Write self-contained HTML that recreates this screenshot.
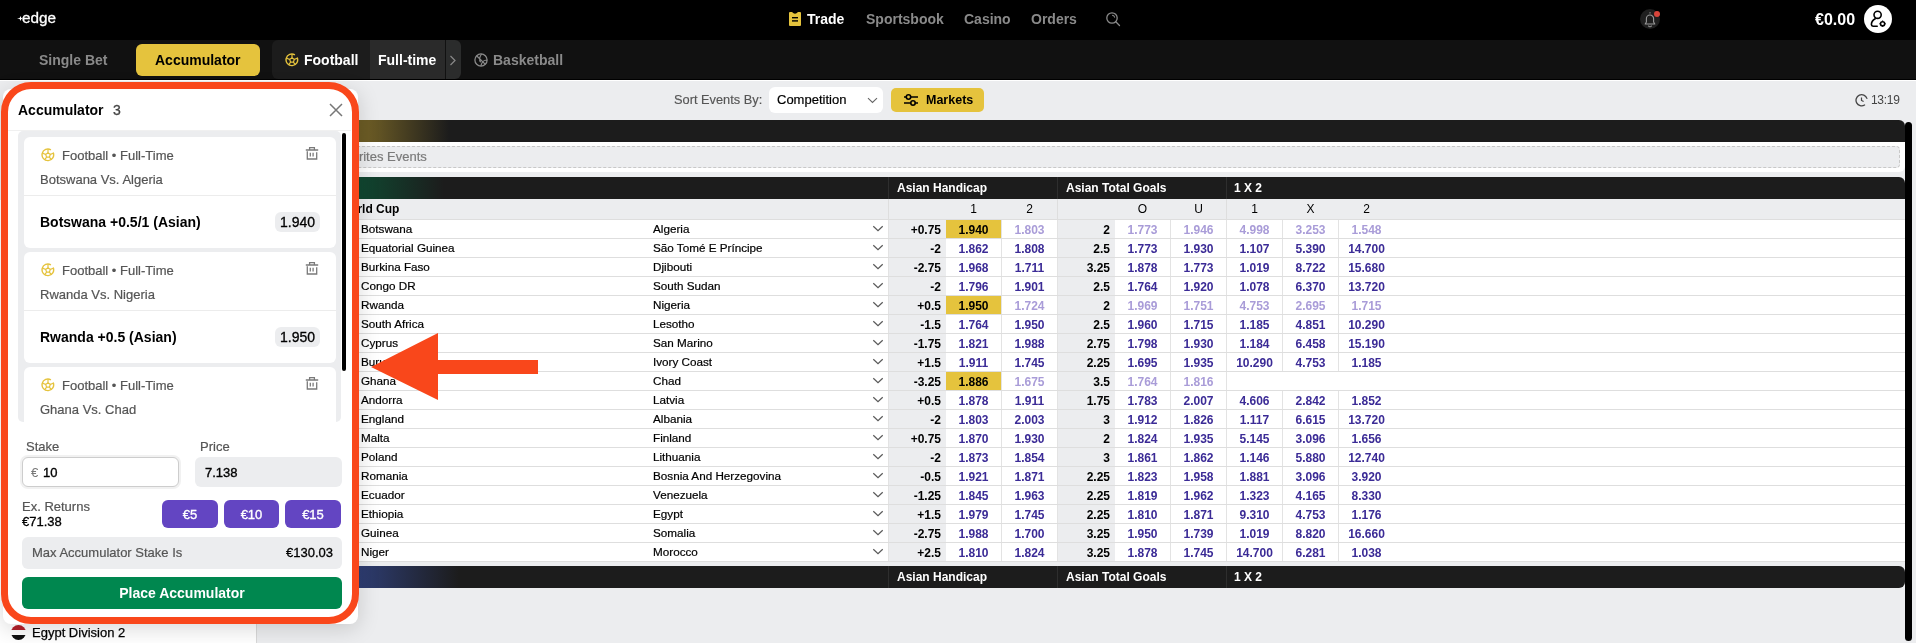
<!DOCTYPE html>
<html><head><meta charset="utf-8">
<style>
*{box-sizing:border-box;margin:0;padding:0}
html,body{width:1916px;height:643px;overflow:hidden;background:#ECEDEF;font-family:"Liberation Sans",sans-serif;color:#000}
.a{position:absolute}
.t{white-space:nowrap;line-height:1}
.nav{top:12px;font-size:14px;font-weight:700;color:#8a8a8a;line-height:14px;white-space:nowrap}
.rowbg{left:269px;width:1636px;height:18px;background:#fff}
.hl{left:269px;width:1636px;height:1px;background:#dedede}
.vl{width:1px;height:18px;background:#e3e3e3}
.tn{font-size:11.7px;line-height:11.7px;white-space:nowrap;color:#000;-webkit-text-stroke:0.2px #000}
.chev{left:873px;width:10px;height:6px}
.chev:before{content:"";position:absolute;left:2px;top:-3px;width:5px;height:5px;border-right:1.2px solid #666;border-bottom:1.2px solid #666;transform:rotate(45deg) scaleY(0.8)}
.gc{width:57px;height:18px;background:#ECEDEF}
.ln{width:57px;padding-right:5px;text-align:right;font-size:12px;line-height:12px;font-weight:700;color:#000}
.ysel{width:55px;height:18px;background:#E5C33D}
.od2{width:55px;text-align:center;font-size:12px;line-height:12px;font-weight:700}
.od{color:#3b2b96}
.ol{color:#a99cd8}
.hdr{left:269px;width:1636px;height:22px;background:#1c1c1c}
.ht{font-size:12px;line-height:12px;font-weight:700;color:#fff;white-space:nowrap}
.ch{width:55px;text-align:center;font-size:12px;line-height:12px;color:#000}
</style></head><body>
<div id="w" style="position:absolute;left:0;top:0;width:1916px;height:643px;will-change:transform;overflow:hidden">
<!-- TOP BAR -->
<div class="a" style="left:0;top:0;width:1916px;height:40px;background:#000"></div>
<svg class="a" style="left:17px;top:16px" width="6" height="5" viewBox="0 0 6 5"><path d="M0 2.5 L2.6 2 L3.6 0 L4.3 2 L6 2.5 L4.3 3 L3.6 5 L2.6 3 Z" fill="#fff"/></svg>
<div class="a t" style="left:22px;top:10px;font-size:15.3px;color:#fff;-webkit-text-stroke:0.3px #fff">edge</div>
<svg class="a" style="left:789px;top:12px" width="12" height="14" viewBox="0 0 12 14"><path d="M1 0 H3 Q6 3.6 9 0 H11 Q12 0 12 1 V13 Q12 14 11 14 H1 Q0 14 0 13 V1 Q0 0 1 0Z" fill="#E5C33D"/><rect x="3" y="5" width="6" height="1.4" fill="#000"/><rect x="3" y="8.2" width="6" height="1.4" fill="#000"/></svg>
<div class="a nav" style="left:807px;color:#fff">Trade</div>
<div class="a nav" style="left:866px">Sportsbook</div>
<div class="a nav" style="left:964px">Casino</div>
<div class="a nav" style="left:1031px">Orders</div>
<svg class="a" style="left:1105px;top:11px" width="16" height="16" viewBox="0 0 16 16"><circle cx="7" cy="7" r="5.2" fill="none" stroke="#8a8a8a" stroke-width="1.3"/><path d="M10.8 10.8 L14.5 14.5" stroke="#8a8a8a" stroke-width="1.3" stroke-linecap="round"/><path d="M7.5 4.3 A2.8 2.8 0 0 1 9.6 6.2" fill="none" stroke="#8a8a8a" stroke-width="1.1" stroke-linecap="round"/></svg>
<div class="a" style="left:1640px;top:9px;width:20px;height:20px;border-radius:50%;background:#1f1f1f"></div>
<svg class="a" style="left:1640px;top:9px" width="20" height="20" viewBox="0 0 20 20"><path d="M10 3.3 V4.6 M5.2 15 L6.4 13 V9.6 A3.6 3.6 0 0 1 13.6 9.6 V13 L14.8 15 Z M8.6 16.4 A1.4 1.4 0 0 0 11.4 16.4" fill="none" stroke="#9a9a9a" stroke-width="1.1" stroke-linejoin="round"/></svg>
<div class="a" style="left:1654px;top:11px;width:6px;height:6px;border-radius:50%;background:#D8453B"></div>
<div class="a nav" style="left:1815px;top:12px;font-size:16px;line-height:16px;color:#fff">&euro;0.00</div>
<div class="a" style="left:1864px;top:5px;width:28px;height:28px;border-radius:50%;background:#fff"></div>
<svg class="a" style="left:1864px;top:5px" width="28" height="28" viewBox="0 0 28 28"><circle cx="13.6" cy="9.8" r="3.6" fill="none" stroke="#000" stroke-width="1.6"/><path d="M11.2 13.8 C8.6 15.2 7.4 17.6 7.4 19.6 C7.4 20.8 8 21.2 9 21.2 H13.2" fill="none" stroke="#000" stroke-width="1.6" stroke-linecap="round"/><circle cx="18.6" cy="18.8" r="2.1" fill="none" stroke="#000" stroke-width="1.6"/><path d="M18.6 15.6V16.3M18.6 21.3V22M15.4 18.8H16.1M21.1 18.8H21.8" stroke="#000" stroke-width="1.1"/></svg>

<!-- SUB BAR -->
<div class="a" style="left:0;top:40px;width:1916px;height:39px;background:#111"></div>
<div class="a" style="left:0;top:79px;width:1916px;height:1px;background:#000"></div>
<div class="a" style="left:0;top:80px;width:1916px;height:1px;background:#fff"></div>
<div class="a nav" style="left:39px;top:53px;color:#8a8a8a">Single Bet</div>
<div class="a" style="left:136px;top:44px;width:124px;height:32px;border-radius:6px;background:#E5C33D"></div>
<div class="a nav" style="left:155px;top:53px;color:#000">Accumulator</div>
<div class="a" style="left:272px;top:40px;width:98px;height:39px;background:#1c1c1c;border-radius:6px 0 0 6px"></div>
<div class="a" style="left:370px;top:40px;width:75px;height:39px;background:#2a2a2a"></div>
<div class="a" style="left:445px;top:40px;width:1px;height:39px;background:#111"></div>
<div class="a" style="left:446px;top:40px;width:15px;height:39px;background:#2b2c2c;border-radius:0 6px 6px 0"></div>
<svg class="a" style="left:285px;top:53px" width="14" height="14" viewBox="0 0 14 14"><path d="M12.2 4.6 A5.8 5.8 0 1 1 9.9 1.9" fill="none" stroke="#E5C33D" stroke-width="1.4"/><polygon points="7,4.7 9.3,6.4 8.4,9.1 5.6,9.1 4.7,6.4" fill="none" stroke="#E5C33D" stroke-width="1.2"/><path d="M7 4.7V1.2M9.3 6.4L12.4 5.3M8.4 9.1L10.4 11.8M5.6 9.1L3.6 11.8M4.7 6.4L1.5 5.3" stroke="#E5C33D" stroke-width="1.2"/></svg>
<div class="a nav" style="left:304px;top:53px;color:#fff">Football</div>
<div class="a nav" style="left:378px;top:53px;color:#fff">Full-time</div>
<svg class="a" style="left:474px;top:53px" width="14" height="14" viewBox="0 0 14 14"><circle cx="7" cy="7" r="6.1" fill="none" stroke="#8a8a8a" stroke-width="1.3"/><path d="M2.6 2.8 L11.4 11.4 M7.6 1 C5.6 3.6 5.2 7 6.6 9.2 M13 7.4 C10.4 6.8 8 8.6 6.8 13" fill="none" stroke="#8a8a8a" stroke-width="1.2"/></svg>
<svg class="a" style="left:449px;top:55px" width="8" height="11" viewBox="0 0 8 11"><path d="M1.5 1 L6 5.5 L1.5 10" fill="none" stroke="#8a8a8a" stroke-width="1.2"/></svg>
<div class="a nav" style="left:493px;top:53px;color:#8a8a8a">Basketball</div>

<!-- SORT BAR -->
<div class="a t" style="left:674px;top:94px;font-size:12.8px;color:#555;-webkit-text-stroke:0.15px #555">Sort Events By:</div>
<div class="a" style="left:769px;top:87px;width:114px;height:26px;background:#fff;border-radius:6px"></div>
<div class="a t" style="left:777px;top:93px;font-size:13px;color:#000;-webkit-text-stroke:0.2px #000">Competition</div>
<div class="a" style="left:891px;top:88px;width:93px;height:24px;background:#E5C33D;border-radius:5px"></div>
<div class="a t" style="left:926px;top:94px;font-size:12.5px;font-weight:700;color:#000">Markets</div>
<svg class="a" style="left:903px;top:93px" width="16" height="14" viewBox="0 0 16 14"><path d="M1 4 H15 M1 10 H15" stroke="#000" stroke-width="1.6"/><circle cx="5.5" cy="4" r="2.2" fill="#E5C33D" stroke="#000" stroke-width="1.6"/><circle cx="10" cy="10" r="2.2" fill="#E5C33D" stroke="#000" stroke-width="1.6"/></svg>
<svg class="a" style="left:867px;top:97px" width="11" height="7" viewBox="0 0 11 7"><path d="M1 1.2 L5.5 5.5 L10 1.2" fill="none" stroke="#666" stroke-width="1.1"/></svg>
<div class="a t" style="left:1871px;top:94px;font-size:12px;color:#444;letter-spacing:-0.3px">13:19</div>
<svg class="a" style="left:1855px;top:93px" width="14" height="14" viewBox="0 0 14 14"><path d="M11.9 5.4 A5.6 5.6 0 1 0 9.6 12" fill="none" stroke="#444" stroke-width="1.3" stroke-linecap="round"/><path d="M6.5 4.6 V7.4 L8.6 8.6" fill="none" stroke="#444" stroke-width="1.2"/></svg>

<!-- TABLE -->
<div class="a" style="left:269px;top:120px;width:1636px;height:22px;background:linear-gradient(90deg,#6e5d25 0,#6b5b25 100px,#1c1c1c 180px);border-radius:6px 6px 0 0"></div>
<div class="a" style="left:269px;top:142px;width:1636px;height:30px;background:#fff;border-radius:0 0 6px 6px"></div>
<div class="a" style="left:273px;top:146px;width:1627px;height:22px;background:#ECEDEF;border:1px dashed #c8c8c8;border-radius:4px"></div>
<div class="a t" style="left:330px;top:150px;font-size:13px;color:#7b7b7b;-webkit-text-stroke:0.2px #7b7b7b">Favorites Events</div>

<div class="a hdr" style="top:177px;background:linear-gradient(90deg,#0f4a32 0,#0f4a32 85px,#1c1c1c 175px);border-radius:6px 6px 0 0"></div>
<div class="a" style="left:888px;top:177px;width:1px;height:22px;background:#2e2e2e"></div>
<div class="a" style="left:1057px;top:177px;width:1px;height:22px;background:#2e2e2e"></div>
<div class="a" style="left:1226px;top:177px;width:1px;height:22px;background:#2e2e2e"></div>
<div class="a ht" style="left:897px;top:182px">Asian Handicap</div>
<div class="a ht" style="left:1066px;top:182px">Asian Total Goals</div>
<div class="a ht" style="left:1234px;top:182px">1 X 2</div>
<div class="a" style="left:269px;top:199px;width:1636px;height:20px;background:#ECEDEF"></div>
<div class="a" style="left:888px;top:199px;width:1px;height:20px;background:#dedede"></div>
<div class="a" style="left:1057px;top:199px;width:1px;height:20px;background:#dedede"></div>
<div class="a" style="left:1226px;top:199px;width:1px;height:20px;background:#dedede"></div>
<div class="a" style="left:269px;top:219px;width:1636px;height:1px;background:#dedede"></div>
<div class="a ht" style="left:339px;top:203px;color:#000">World Cup</div>
<div class="a ch" style="left:946px;top:203px">1</div>
<div class="a ch" style="left:1002px;top:203px">2</div>
<div class="a ch" style="left:1115px;top:203px">O</div>
<div class="a ch" style="left:1171px;top:203px">U</div>
<div class="a ch" style="left:1227px;top:203px">1</div>
<div class="a ch" style="left:1283px;top:203px">X</div>
<div class="a ch" style="left:1339px;top:203px">2</div>

<div class="a hdr" style="top:566px;background:linear-gradient(90deg,#2e3d73 0,#2e3d73 90px,#1c1c1c 190px);border-radius:0 6px 6px 6px"></div>
<div class="a" style="left:888px;top:566px;width:1px;height:22px;background:#2e2e2e"></div>
<div class="a" style="left:1057px;top:566px;width:1px;height:22px;background:#2e2e2e"></div>
<div class="a" style="left:1226px;top:566px;width:1px;height:22px;background:#2e2e2e"></div>
<div class="a ht" style="left:897px;top:571px">Asian Handicap</div>
<div class="a ht" style="left:1066px;top:571px">Asian Total Goals</div>
<div class="a ht" style="left:1234px;top:571px">1 X 2</div>
<div class="a" style="left:1905px;top:122px;width:7px;height:519px;background:#000;border-radius:4px"></div>
<div class="a rowbg" style="top:220px"></div>
<div class="a hl" style="top:238px"></div>
<div class="a tn" style="left:361px;top:223px">Botswana</div>
<div class="a tn" style="left:653px;top:223px">Algeria</div>
<svg class="a" style="left:872px;top:225px" width="12" height="7" viewBox="0 0 12 7"><path d="M1.3 1.2 L6 5.6 L10.7 1.2" fill="none" stroke="#5a5a5a" stroke-width="1.25"/></svg>
<div class="a gc" style="left:889px;top:220px"></div>
<div class="a gc" style="left:1058px;top:220px"></div>
<div class="a ln" style="left:889px;top:224px">+0.75</div>
<div class="a ln" style="left:1058px;top:224px">2</div>
<div class="a ysel" style="left:946px;top:220px"></div>
<div class="a od2" style="left:946px;top:224px;color:#000">1.940</div>
<div class="a od2 ol" style="left:1002px;top:224px">1.803</div>
<div class="a od2 ol" style="left:1115px;top:224px">1.773</div>
<div class="a od2 ol" style="left:1171px;top:224px">1.946</div>
<div class="a od2 ol" style="left:1227px;top:224px">4.998</div>
<div class="a od2 ol" style="left:1283px;top:224px">3.253</div>
<div class="a od2 ol" style="left:1339px;top:224px">1.548</div>
<div class="a vl" style="left:888px;top:220px"></div>
<div class="a vl" style="left:1001px;top:220px"></div>
<div class="a vl" style="left:1057px;top:220px"></div>
<div class="a vl" style="left:1170px;top:220px"></div>
<div class="a vl" style="left:1226px;top:220px"></div>
<div class="a vl" style="left:1282px;top:220px"></div>
<div class="a vl" style="left:1338px;top:220px"></div>
<div class="a rowbg" style="top:239px"></div>
<div class="a hl" style="top:257px"></div>
<div class="a tn" style="left:361px;top:242px">Equatorial Guinea</div>
<div class="a tn" style="left:653px;top:242px">São Tomé E Príncipe</div>
<svg class="a" style="left:872px;top:244px" width="12" height="7" viewBox="0 0 12 7"><path d="M1.3 1.2 L6 5.6 L10.7 1.2" fill="none" stroke="#5a5a5a" stroke-width="1.25"/></svg>
<div class="a gc" style="left:889px;top:239px"></div>
<div class="a gc" style="left:1058px;top:239px"></div>
<div class="a ln" style="left:889px;top:243px">-2</div>
<div class="a ln" style="left:1058px;top:243px">2.5</div>
<div class="a od2 od" style="left:946px;top:243px">1.862</div>
<div class="a od2 od" style="left:1002px;top:243px">1.808</div>
<div class="a od2 od" style="left:1115px;top:243px">1.773</div>
<div class="a od2 od" style="left:1171px;top:243px">1.930</div>
<div class="a od2 od" style="left:1227px;top:243px">1.107</div>
<div class="a od2 od" style="left:1283px;top:243px">5.390</div>
<div class="a od2 od" style="left:1339px;top:243px">14.700</div>
<div class="a vl" style="left:888px;top:239px"></div>
<div class="a vl" style="left:1001px;top:239px"></div>
<div class="a vl" style="left:1057px;top:239px"></div>
<div class="a vl" style="left:1170px;top:239px"></div>
<div class="a vl" style="left:1226px;top:239px"></div>
<div class="a vl" style="left:1282px;top:239px"></div>
<div class="a vl" style="left:1338px;top:239px"></div>
<div class="a rowbg" style="top:258px"></div>
<div class="a hl" style="top:276px"></div>
<div class="a tn" style="left:361px;top:261px">Burkina Faso</div>
<div class="a tn" style="left:653px;top:261px">Djibouti</div>
<svg class="a" style="left:872px;top:263px" width="12" height="7" viewBox="0 0 12 7"><path d="M1.3 1.2 L6 5.6 L10.7 1.2" fill="none" stroke="#5a5a5a" stroke-width="1.25"/></svg>
<div class="a gc" style="left:889px;top:258px"></div>
<div class="a gc" style="left:1058px;top:258px"></div>
<div class="a ln" style="left:889px;top:262px">-2.75</div>
<div class="a ln" style="left:1058px;top:262px">3.25</div>
<div class="a od2 od" style="left:946px;top:262px">1.968</div>
<div class="a od2 od" style="left:1002px;top:262px">1.711</div>
<div class="a od2 od" style="left:1115px;top:262px">1.878</div>
<div class="a od2 od" style="left:1171px;top:262px">1.773</div>
<div class="a od2 od" style="left:1227px;top:262px">1.019</div>
<div class="a od2 od" style="left:1283px;top:262px">8.722</div>
<div class="a od2 od" style="left:1339px;top:262px">15.680</div>
<div class="a vl" style="left:888px;top:258px"></div>
<div class="a vl" style="left:1001px;top:258px"></div>
<div class="a vl" style="left:1057px;top:258px"></div>
<div class="a vl" style="left:1170px;top:258px"></div>
<div class="a vl" style="left:1226px;top:258px"></div>
<div class="a vl" style="left:1282px;top:258px"></div>
<div class="a vl" style="left:1338px;top:258px"></div>
<div class="a rowbg" style="top:277px"></div>
<div class="a hl" style="top:295px"></div>
<div class="a tn" style="left:361px;top:280px">Congo DR</div>
<div class="a tn" style="left:653px;top:280px">South Sudan</div>
<svg class="a" style="left:872px;top:282px" width="12" height="7" viewBox="0 0 12 7"><path d="M1.3 1.2 L6 5.6 L10.7 1.2" fill="none" stroke="#5a5a5a" stroke-width="1.25"/></svg>
<div class="a gc" style="left:889px;top:277px"></div>
<div class="a gc" style="left:1058px;top:277px"></div>
<div class="a ln" style="left:889px;top:281px">-2</div>
<div class="a ln" style="left:1058px;top:281px">2.5</div>
<div class="a od2 od" style="left:946px;top:281px">1.796</div>
<div class="a od2 od" style="left:1002px;top:281px">1.901</div>
<div class="a od2 od" style="left:1115px;top:281px">1.764</div>
<div class="a od2 od" style="left:1171px;top:281px">1.920</div>
<div class="a od2 od" style="left:1227px;top:281px">1.078</div>
<div class="a od2 od" style="left:1283px;top:281px">6.370</div>
<div class="a od2 od" style="left:1339px;top:281px">13.720</div>
<div class="a vl" style="left:888px;top:277px"></div>
<div class="a vl" style="left:1001px;top:277px"></div>
<div class="a vl" style="left:1057px;top:277px"></div>
<div class="a vl" style="left:1170px;top:277px"></div>
<div class="a vl" style="left:1226px;top:277px"></div>
<div class="a vl" style="left:1282px;top:277px"></div>
<div class="a vl" style="left:1338px;top:277px"></div>
<div class="a rowbg" style="top:296px"></div>
<div class="a hl" style="top:314px"></div>
<div class="a tn" style="left:361px;top:299px">Rwanda</div>
<div class="a tn" style="left:653px;top:299px">Nigeria</div>
<svg class="a" style="left:872px;top:301px" width="12" height="7" viewBox="0 0 12 7"><path d="M1.3 1.2 L6 5.6 L10.7 1.2" fill="none" stroke="#5a5a5a" stroke-width="1.25"/></svg>
<div class="a gc" style="left:889px;top:296px"></div>
<div class="a gc" style="left:1058px;top:296px"></div>
<div class="a ln" style="left:889px;top:300px">+0.5</div>
<div class="a ln" style="left:1058px;top:300px">2</div>
<div class="a ysel" style="left:946px;top:296px"></div>
<div class="a od2" style="left:946px;top:300px;color:#000">1.950</div>
<div class="a od2 ol" style="left:1002px;top:300px">1.724</div>
<div class="a od2 ol" style="left:1115px;top:300px">1.969</div>
<div class="a od2 ol" style="left:1171px;top:300px">1.751</div>
<div class="a od2 ol" style="left:1227px;top:300px">4.753</div>
<div class="a od2 ol" style="left:1283px;top:300px">2.695</div>
<div class="a od2 ol" style="left:1339px;top:300px">1.715</div>
<div class="a vl" style="left:888px;top:296px"></div>
<div class="a vl" style="left:1001px;top:296px"></div>
<div class="a vl" style="left:1057px;top:296px"></div>
<div class="a vl" style="left:1170px;top:296px"></div>
<div class="a vl" style="left:1226px;top:296px"></div>
<div class="a vl" style="left:1282px;top:296px"></div>
<div class="a vl" style="left:1338px;top:296px"></div>
<div class="a rowbg" style="top:315px"></div>
<div class="a hl" style="top:333px"></div>
<div class="a tn" style="left:361px;top:318px">South Africa</div>
<div class="a tn" style="left:653px;top:318px">Lesotho</div>
<svg class="a" style="left:872px;top:320px" width="12" height="7" viewBox="0 0 12 7"><path d="M1.3 1.2 L6 5.6 L10.7 1.2" fill="none" stroke="#5a5a5a" stroke-width="1.25"/></svg>
<div class="a gc" style="left:889px;top:315px"></div>
<div class="a gc" style="left:1058px;top:315px"></div>
<div class="a ln" style="left:889px;top:319px">-1.5</div>
<div class="a ln" style="left:1058px;top:319px">2.5</div>
<div class="a od2 od" style="left:946px;top:319px">1.764</div>
<div class="a od2 od" style="left:1002px;top:319px">1.950</div>
<div class="a od2 od" style="left:1115px;top:319px">1.960</div>
<div class="a od2 od" style="left:1171px;top:319px">1.715</div>
<div class="a od2 od" style="left:1227px;top:319px">1.185</div>
<div class="a od2 od" style="left:1283px;top:319px">4.851</div>
<div class="a od2 od" style="left:1339px;top:319px">10.290</div>
<div class="a vl" style="left:888px;top:315px"></div>
<div class="a vl" style="left:1001px;top:315px"></div>
<div class="a vl" style="left:1057px;top:315px"></div>
<div class="a vl" style="left:1170px;top:315px"></div>
<div class="a vl" style="left:1226px;top:315px"></div>
<div class="a vl" style="left:1282px;top:315px"></div>
<div class="a vl" style="left:1338px;top:315px"></div>
<div class="a rowbg" style="top:334px"></div>
<div class="a hl" style="top:352px"></div>
<div class="a tn" style="left:361px;top:337px">Cyprus</div>
<div class="a tn" style="left:653px;top:337px">San Marino</div>
<svg class="a" style="left:872px;top:339px" width="12" height="7" viewBox="0 0 12 7"><path d="M1.3 1.2 L6 5.6 L10.7 1.2" fill="none" stroke="#5a5a5a" stroke-width="1.25"/></svg>
<div class="a gc" style="left:889px;top:334px"></div>
<div class="a gc" style="left:1058px;top:334px"></div>
<div class="a ln" style="left:889px;top:338px">-1.75</div>
<div class="a ln" style="left:1058px;top:338px">2.75</div>
<div class="a od2 od" style="left:946px;top:338px">1.821</div>
<div class="a od2 od" style="left:1002px;top:338px">1.988</div>
<div class="a od2 od" style="left:1115px;top:338px">1.798</div>
<div class="a od2 od" style="left:1171px;top:338px">1.930</div>
<div class="a od2 od" style="left:1227px;top:338px">1.184</div>
<div class="a od2 od" style="left:1283px;top:338px">6.458</div>
<div class="a od2 od" style="left:1339px;top:338px">15.190</div>
<div class="a vl" style="left:888px;top:334px"></div>
<div class="a vl" style="left:1001px;top:334px"></div>
<div class="a vl" style="left:1057px;top:334px"></div>
<div class="a vl" style="left:1170px;top:334px"></div>
<div class="a vl" style="left:1226px;top:334px"></div>
<div class="a vl" style="left:1282px;top:334px"></div>
<div class="a vl" style="left:1338px;top:334px"></div>
<div class="a rowbg" style="top:353px"></div>
<div class="a hl" style="top:371px"></div>
<div class="a tn" style="left:361px;top:356px">Burundi</div>
<div class="a tn" style="left:653px;top:356px">Ivory Coast</div>
<svg class="a" style="left:872px;top:358px" width="12" height="7" viewBox="0 0 12 7"><path d="M1.3 1.2 L6 5.6 L10.7 1.2" fill="none" stroke="#5a5a5a" stroke-width="1.25"/></svg>
<div class="a gc" style="left:889px;top:353px"></div>
<div class="a gc" style="left:1058px;top:353px"></div>
<div class="a ln" style="left:889px;top:357px">+1.5</div>
<div class="a ln" style="left:1058px;top:357px">2.25</div>
<div class="a od2 od" style="left:946px;top:357px">1.911</div>
<div class="a od2 od" style="left:1002px;top:357px">1.745</div>
<div class="a od2 od" style="left:1115px;top:357px">1.695</div>
<div class="a od2 od" style="left:1171px;top:357px">1.935</div>
<div class="a od2 od" style="left:1227px;top:357px">10.290</div>
<div class="a od2 od" style="left:1283px;top:357px">4.753</div>
<div class="a od2 od" style="left:1339px;top:357px">1.185</div>
<div class="a vl" style="left:888px;top:353px"></div>
<div class="a vl" style="left:1001px;top:353px"></div>
<div class="a vl" style="left:1057px;top:353px"></div>
<div class="a vl" style="left:1170px;top:353px"></div>
<div class="a vl" style="left:1226px;top:353px"></div>
<div class="a vl" style="left:1282px;top:353px"></div>
<div class="a vl" style="left:1338px;top:353px"></div>
<div class="a rowbg" style="top:372px"></div>
<div class="a hl" style="top:390px"></div>
<div class="a tn" style="left:361px;top:375px">Ghana</div>
<div class="a tn" style="left:653px;top:375px">Chad</div>
<svg class="a" style="left:872px;top:377px" width="12" height="7" viewBox="0 0 12 7"><path d="M1.3 1.2 L6 5.6 L10.7 1.2" fill="none" stroke="#5a5a5a" stroke-width="1.25"/></svg>
<div class="a gc" style="left:889px;top:372px"></div>
<div class="a gc" style="left:1058px;top:372px"></div>
<div class="a ln" style="left:889px;top:376px">-3.25</div>
<div class="a ln" style="left:1058px;top:376px">3.5</div>
<div class="a ysel" style="left:946px;top:372px"></div>
<div class="a od2" style="left:946px;top:376px;color:#000">1.886</div>
<div class="a od2 ol" style="left:1002px;top:376px">1.675</div>
<div class="a od2 ol" style="left:1115px;top:376px">1.764</div>
<div class="a od2 ol" style="left:1171px;top:376px">1.816</div>
<div class="a vl" style="left:888px;top:372px"></div>
<div class="a vl" style="left:1001px;top:372px"></div>
<div class="a vl" style="left:1057px;top:372px"></div>
<div class="a vl" style="left:1170px;top:372px"></div>
<div class="a vl" style="left:1226px;top:372px"></div>
<div class="a rowbg" style="top:391px"></div>
<div class="a hl" style="top:409px"></div>
<div class="a tn" style="left:361px;top:394px">Andorra</div>
<div class="a tn" style="left:653px;top:394px">Latvia</div>
<svg class="a" style="left:872px;top:396px" width="12" height="7" viewBox="0 0 12 7"><path d="M1.3 1.2 L6 5.6 L10.7 1.2" fill="none" stroke="#5a5a5a" stroke-width="1.25"/></svg>
<div class="a gc" style="left:889px;top:391px"></div>
<div class="a gc" style="left:1058px;top:391px"></div>
<div class="a ln" style="left:889px;top:395px">+0.5</div>
<div class="a ln" style="left:1058px;top:395px">1.75</div>
<div class="a od2 od" style="left:946px;top:395px">1.878</div>
<div class="a od2 od" style="left:1002px;top:395px">1.911</div>
<div class="a od2 od" style="left:1115px;top:395px">1.783</div>
<div class="a od2 od" style="left:1171px;top:395px">2.007</div>
<div class="a od2 od" style="left:1227px;top:395px">4.606</div>
<div class="a od2 od" style="left:1283px;top:395px">2.842</div>
<div class="a od2 od" style="left:1339px;top:395px">1.852</div>
<div class="a vl" style="left:888px;top:391px"></div>
<div class="a vl" style="left:1001px;top:391px"></div>
<div class="a vl" style="left:1057px;top:391px"></div>
<div class="a vl" style="left:1170px;top:391px"></div>
<div class="a vl" style="left:1226px;top:391px"></div>
<div class="a vl" style="left:1282px;top:391px"></div>
<div class="a vl" style="left:1338px;top:391px"></div>
<div class="a rowbg" style="top:410px"></div>
<div class="a hl" style="top:428px"></div>
<div class="a tn" style="left:361px;top:413px">England</div>
<div class="a tn" style="left:653px;top:413px">Albania</div>
<svg class="a" style="left:872px;top:415px" width="12" height="7" viewBox="0 0 12 7"><path d="M1.3 1.2 L6 5.6 L10.7 1.2" fill="none" stroke="#5a5a5a" stroke-width="1.25"/></svg>
<div class="a gc" style="left:889px;top:410px"></div>
<div class="a gc" style="left:1058px;top:410px"></div>
<div class="a ln" style="left:889px;top:414px">-2</div>
<div class="a ln" style="left:1058px;top:414px">3</div>
<div class="a od2 od" style="left:946px;top:414px">1.803</div>
<div class="a od2 od" style="left:1002px;top:414px">2.003</div>
<div class="a od2 od" style="left:1115px;top:414px">1.912</div>
<div class="a od2 od" style="left:1171px;top:414px">1.826</div>
<div class="a od2 od" style="left:1227px;top:414px">1.117</div>
<div class="a od2 od" style="left:1283px;top:414px">6.615</div>
<div class="a od2 od" style="left:1339px;top:414px">13.720</div>
<div class="a vl" style="left:888px;top:410px"></div>
<div class="a vl" style="left:1001px;top:410px"></div>
<div class="a vl" style="left:1057px;top:410px"></div>
<div class="a vl" style="left:1170px;top:410px"></div>
<div class="a vl" style="left:1226px;top:410px"></div>
<div class="a vl" style="left:1282px;top:410px"></div>
<div class="a vl" style="left:1338px;top:410px"></div>
<div class="a rowbg" style="top:429px"></div>
<div class="a hl" style="top:447px"></div>
<div class="a tn" style="left:361px;top:432px">Malta</div>
<div class="a tn" style="left:653px;top:432px">Finland</div>
<svg class="a" style="left:872px;top:434px" width="12" height="7" viewBox="0 0 12 7"><path d="M1.3 1.2 L6 5.6 L10.7 1.2" fill="none" stroke="#5a5a5a" stroke-width="1.25"/></svg>
<div class="a gc" style="left:889px;top:429px"></div>
<div class="a gc" style="left:1058px;top:429px"></div>
<div class="a ln" style="left:889px;top:433px">+0.75</div>
<div class="a ln" style="left:1058px;top:433px">2</div>
<div class="a od2 od" style="left:946px;top:433px">1.870</div>
<div class="a od2 od" style="left:1002px;top:433px">1.930</div>
<div class="a od2 od" style="left:1115px;top:433px">1.824</div>
<div class="a od2 od" style="left:1171px;top:433px">1.935</div>
<div class="a od2 od" style="left:1227px;top:433px">5.145</div>
<div class="a od2 od" style="left:1283px;top:433px">3.096</div>
<div class="a od2 od" style="left:1339px;top:433px">1.656</div>
<div class="a vl" style="left:888px;top:429px"></div>
<div class="a vl" style="left:1001px;top:429px"></div>
<div class="a vl" style="left:1057px;top:429px"></div>
<div class="a vl" style="left:1170px;top:429px"></div>
<div class="a vl" style="left:1226px;top:429px"></div>
<div class="a vl" style="left:1282px;top:429px"></div>
<div class="a vl" style="left:1338px;top:429px"></div>
<div class="a rowbg" style="top:448px"></div>
<div class="a hl" style="top:466px"></div>
<div class="a tn" style="left:361px;top:451px">Poland</div>
<div class="a tn" style="left:653px;top:451px">Lithuania</div>
<svg class="a" style="left:872px;top:453px" width="12" height="7" viewBox="0 0 12 7"><path d="M1.3 1.2 L6 5.6 L10.7 1.2" fill="none" stroke="#5a5a5a" stroke-width="1.25"/></svg>
<div class="a gc" style="left:889px;top:448px"></div>
<div class="a gc" style="left:1058px;top:448px"></div>
<div class="a ln" style="left:889px;top:452px">-2</div>
<div class="a ln" style="left:1058px;top:452px">3</div>
<div class="a od2 od" style="left:946px;top:452px">1.873</div>
<div class="a od2 od" style="left:1002px;top:452px">1.854</div>
<div class="a od2 od" style="left:1115px;top:452px">1.861</div>
<div class="a od2 od" style="left:1171px;top:452px">1.862</div>
<div class="a od2 od" style="left:1227px;top:452px">1.146</div>
<div class="a od2 od" style="left:1283px;top:452px">5.880</div>
<div class="a od2 od" style="left:1339px;top:452px">12.740</div>
<div class="a vl" style="left:888px;top:448px"></div>
<div class="a vl" style="left:1001px;top:448px"></div>
<div class="a vl" style="left:1057px;top:448px"></div>
<div class="a vl" style="left:1170px;top:448px"></div>
<div class="a vl" style="left:1226px;top:448px"></div>
<div class="a vl" style="left:1282px;top:448px"></div>
<div class="a vl" style="left:1338px;top:448px"></div>
<div class="a rowbg" style="top:467px"></div>
<div class="a hl" style="top:485px"></div>
<div class="a tn" style="left:361px;top:470px">Romania</div>
<div class="a tn" style="left:653px;top:470px">Bosnia And Herzegovina</div>
<svg class="a" style="left:872px;top:472px" width="12" height="7" viewBox="0 0 12 7"><path d="M1.3 1.2 L6 5.6 L10.7 1.2" fill="none" stroke="#5a5a5a" stroke-width="1.25"/></svg>
<div class="a gc" style="left:889px;top:467px"></div>
<div class="a gc" style="left:1058px;top:467px"></div>
<div class="a ln" style="left:889px;top:471px">-0.5</div>
<div class="a ln" style="left:1058px;top:471px">2.25</div>
<div class="a od2 od" style="left:946px;top:471px">1.921</div>
<div class="a od2 od" style="left:1002px;top:471px">1.871</div>
<div class="a od2 od" style="left:1115px;top:471px">1.823</div>
<div class="a od2 od" style="left:1171px;top:471px">1.958</div>
<div class="a od2 od" style="left:1227px;top:471px">1.881</div>
<div class="a od2 od" style="left:1283px;top:471px">3.096</div>
<div class="a od2 od" style="left:1339px;top:471px">3.920</div>
<div class="a vl" style="left:888px;top:467px"></div>
<div class="a vl" style="left:1001px;top:467px"></div>
<div class="a vl" style="left:1057px;top:467px"></div>
<div class="a vl" style="left:1170px;top:467px"></div>
<div class="a vl" style="left:1226px;top:467px"></div>
<div class="a vl" style="left:1282px;top:467px"></div>
<div class="a vl" style="left:1338px;top:467px"></div>
<div class="a rowbg" style="top:486px"></div>
<div class="a hl" style="top:504px"></div>
<div class="a tn" style="left:361px;top:489px">Ecuador</div>
<div class="a tn" style="left:653px;top:489px">Venezuela</div>
<svg class="a" style="left:872px;top:491px" width="12" height="7" viewBox="0 0 12 7"><path d="M1.3 1.2 L6 5.6 L10.7 1.2" fill="none" stroke="#5a5a5a" stroke-width="1.25"/></svg>
<div class="a gc" style="left:889px;top:486px"></div>
<div class="a gc" style="left:1058px;top:486px"></div>
<div class="a ln" style="left:889px;top:490px">-1.25</div>
<div class="a ln" style="left:1058px;top:490px">2.25</div>
<div class="a od2 od" style="left:946px;top:490px">1.845</div>
<div class="a od2 od" style="left:1002px;top:490px">1.963</div>
<div class="a od2 od" style="left:1115px;top:490px">1.819</div>
<div class="a od2 od" style="left:1171px;top:490px">1.962</div>
<div class="a od2 od" style="left:1227px;top:490px">1.323</div>
<div class="a od2 od" style="left:1283px;top:490px">4.165</div>
<div class="a od2 od" style="left:1339px;top:490px">8.330</div>
<div class="a vl" style="left:888px;top:486px"></div>
<div class="a vl" style="left:1001px;top:486px"></div>
<div class="a vl" style="left:1057px;top:486px"></div>
<div class="a vl" style="left:1170px;top:486px"></div>
<div class="a vl" style="left:1226px;top:486px"></div>
<div class="a vl" style="left:1282px;top:486px"></div>
<div class="a vl" style="left:1338px;top:486px"></div>
<div class="a rowbg" style="top:505px"></div>
<div class="a hl" style="top:523px"></div>
<div class="a tn" style="left:361px;top:508px">Ethiopia</div>
<div class="a tn" style="left:653px;top:508px">Egypt</div>
<svg class="a" style="left:872px;top:510px" width="12" height="7" viewBox="0 0 12 7"><path d="M1.3 1.2 L6 5.6 L10.7 1.2" fill="none" stroke="#5a5a5a" stroke-width="1.25"/></svg>
<div class="a gc" style="left:889px;top:505px"></div>
<div class="a gc" style="left:1058px;top:505px"></div>
<div class="a ln" style="left:889px;top:509px">+1.5</div>
<div class="a ln" style="left:1058px;top:509px">2.25</div>
<div class="a od2 od" style="left:946px;top:509px">1.979</div>
<div class="a od2 od" style="left:1002px;top:509px">1.745</div>
<div class="a od2 od" style="left:1115px;top:509px">1.810</div>
<div class="a od2 od" style="left:1171px;top:509px">1.871</div>
<div class="a od2 od" style="left:1227px;top:509px">9.310</div>
<div class="a od2 od" style="left:1283px;top:509px">4.753</div>
<div class="a od2 od" style="left:1339px;top:509px">1.176</div>
<div class="a vl" style="left:888px;top:505px"></div>
<div class="a vl" style="left:1001px;top:505px"></div>
<div class="a vl" style="left:1057px;top:505px"></div>
<div class="a vl" style="left:1170px;top:505px"></div>
<div class="a vl" style="left:1226px;top:505px"></div>
<div class="a vl" style="left:1282px;top:505px"></div>
<div class="a vl" style="left:1338px;top:505px"></div>
<div class="a rowbg" style="top:524px"></div>
<div class="a hl" style="top:542px"></div>
<div class="a tn" style="left:361px;top:527px">Guinea</div>
<div class="a tn" style="left:653px;top:527px">Somalia</div>
<svg class="a" style="left:872px;top:529px" width="12" height="7" viewBox="0 0 12 7"><path d="M1.3 1.2 L6 5.6 L10.7 1.2" fill="none" stroke="#5a5a5a" stroke-width="1.25"/></svg>
<div class="a gc" style="left:889px;top:524px"></div>
<div class="a gc" style="left:1058px;top:524px"></div>
<div class="a ln" style="left:889px;top:528px">-2.75</div>
<div class="a ln" style="left:1058px;top:528px">3.25</div>
<div class="a od2 od" style="left:946px;top:528px">1.988</div>
<div class="a od2 od" style="left:1002px;top:528px">1.700</div>
<div class="a od2 od" style="left:1115px;top:528px">1.950</div>
<div class="a od2 od" style="left:1171px;top:528px">1.739</div>
<div class="a od2 od" style="left:1227px;top:528px">1.019</div>
<div class="a od2 od" style="left:1283px;top:528px">8.820</div>
<div class="a od2 od" style="left:1339px;top:528px">16.660</div>
<div class="a vl" style="left:888px;top:524px"></div>
<div class="a vl" style="left:1001px;top:524px"></div>
<div class="a vl" style="left:1057px;top:524px"></div>
<div class="a vl" style="left:1170px;top:524px"></div>
<div class="a vl" style="left:1226px;top:524px"></div>
<div class="a vl" style="left:1282px;top:524px"></div>
<div class="a vl" style="left:1338px;top:524px"></div>
<div class="a rowbg" style="top:543px"></div>
<div class="a hl" style="top:561px"></div>
<div class="a tn" style="left:361px;top:546px">Niger</div>
<div class="a tn" style="left:653px;top:546px">Morocco</div>
<svg class="a" style="left:872px;top:548px" width="12" height="7" viewBox="0 0 12 7"><path d="M1.3 1.2 L6 5.6 L10.7 1.2" fill="none" stroke="#5a5a5a" stroke-width="1.25"/></svg>
<div class="a gc" style="left:889px;top:543px"></div>
<div class="a gc" style="left:1058px;top:543px"></div>
<div class="a ln" style="left:889px;top:547px">+2.5</div>
<div class="a ln" style="left:1058px;top:547px">3.25</div>
<div class="a od2 od" style="left:946px;top:547px">1.810</div>
<div class="a od2 od" style="left:1002px;top:547px">1.824</div>
<div class="a od2 od" style="left:1115px;top:547px">1.878</div>
<div class="a od2 od" style="left:1171px;top:547px">1.745</div>
<div class="a od2 od" style="left:1227px;top:547px">14.700</div>
<div class="a od2 od" style="left:1283px;top:547px">6.281</div>
<div class="a od2 od" style="left:1339px;top:547px">1.038</div>
<div class="a vl" style="left:888px;top:543px"></div>
<div class="a vl" style="left:1001px;top:543px"></div>
<div class="a vl" style="left:1057px;top:543px"></div>
<div class="a vl" style="left:1170px;top:543px"></div>
<div class="a vl" style="left:1226px;top:543px"></div>
<div class="a vl" style="left:1282px;top:543px"></div>
<div class="a vl" style="left:1338px;top:543px"></div><div class="a" style="left:0;top:200px;width:257px;height:443px;background:#fff;border-right:1px solid #d8d8d8"></div>
<div class="a" style="left:11px;top:625px;width:15px;height:15px;border-radius:50%;overflow:hidden;background:linear-gradient(#b3202a 0,#b3202a 33%,#fff 33%,#fff 66%,#111 66%)"></div>
<div class="a t" style="left:32px;top:626px;font-size:13px;color:#000;-webkit-text-stroke:0.25px #000">Egypt Division 2</div>
<div class="a" style="left:3px;top:89px;width:355px;height:535px;background:#fff;border-radius:8px;box-shadow:0 4px 22px rgba(0,0,0,0.16)"></div>
<div class="a t" style="left:18px;top:103px;font-size:14px;font-weight:700;color:#000">Accumulator</div>
<div class="a t" style="left:113px;top:103px;font-size:14px;color:#444;-webkit-text-stroke:0.3px #444">3</div>
<svg class="a" style="left:329px;top:103px" width="14" height="14" viewBox="0 0 14 14"><path d="M1 1L13 13M13 1L1 13" stroke="#777" stroke-width="1.5"/></svg>
<div class="a" style="left:8px;top:130px;width:343px;height:1px;background:#f0f0f0"></div>
<div class="a" style="left:18px;top:131px;width:323px;height:291px;background:#ECEDEF;border-radius:5px;overflow:hidden">
<div class="a" style="left:6px;top:6px;width:312px;height:111px;background:#fff;border-radius:6px"></div>
<svg class="a" style="left:23px;top:17px" width="14" height="14" viewBox="0 0 14 14"><path d="M12.2 4.6 A5.8 5.8 0 1 1 9.9 1.9" fill="none" stroke="#E5C33D" stroke-width="1.4"/><polygon points="7,4.7 9.3,6.4 8.4,9.1 5.6,9.1 4.7,6.4" fill="none" stroke="#E5C33D" stroke-width="1.2"/><path d="M7 4.7V1.2M9.3 6.4L12.4 5.3M8.4 9.1L10.4 11.8M5.6 9.1L3.6 11.8M4.7 6.4L1.5 5.3" stroke="#E5C33D" stroke-width="1.2"/></svg>
<div class="a t" style="left:44px;top:18px;font-size:13px;color:#555;-webkit-text-stroke:0.2px #555">Football &bull; Full-Time</div>
<svg class="a" style="left:287px;top:15px" width="14" height="14" viewBox="0 0 14 14"><path d="M0.8 4H13.2M4.6 4V1.6H9.4V4M2.3 5.2V13H11.7V6.2M5.3 6.8V10.4M8.1 6.8V10.4" fill="none" stroke="#7a7a7a" stroke-width="1.3"/></svg>
<div class="a t" style="left:22px;top:42px;font-size:13px;color:#555;-webkit-text-stroke:0.2px #555">Botswana Vs. Algeria</div>
<div class="a" style="left:6px;top:64px;width:312px;height:1px;background:#ececec"></div>
<div class="a t" style="left:22px;top:84px;font-size:14px;font-weight:700;color:#000">Botswana +0.5/1 (Asian)</div>
<div class="a" style="left:257px;top:81px;width:45px;height:20px;background:#ECEDEF;border-radius:6px"></div>
<div class="a t" style="left:257px;top:84px;width:45px;text-align:center;font-size:14px;color:#000;-webkit-text-stroke:0.3px #000">1.940</div>
<div class="a" style="left:6px;top:121px;width:312px;height:111px;background:#fff;border-radius:6px"></div>
<svg class="a" style="left:23px;top:132px" width="14" height="14" viewBox="0 0 14 14"><path d="M12.2 4.6 A5.8 5.8 0 1 1 9.9 1.9" fill="none" stroke="#E5C33D" stroke-width="1.4"/><polygon points="7,4.7 9.3,6.4 8.4,9.1 5.6,9.1 4.7,6.4" fill="none" stroke="#E5C33D" stroke-width="1.2"/><path d="M7 4.7V1.2M9.3 6.4L12.4 5.3M8.4 9.1L10.4 11.8M5.6 9.1L3.6 11.8M4.7 6.4L1.5 5.3" stroke="#E5C33D" stroke-width="1.2"/></svg>
<div class="a t" style="left:44px;top:133px;font-size:13px;color:#555;-webkit-text-stroke:0.2px #555">Football &bull; Full-Time</div>
<svg class="a" style="left:287px;top:130px" width="14" height="14" viewBox="0 0 14 14"><path d="M0.8 4H13.2M4.6 4V1.6H9.4V4M2.3 5.2V13H11.7V6.2M5.3 6.8V10.4M8.1 6.8V10.4" fill="none" stroke="#7a7a7a" stroke-width="1.3"/></svg>
<div class="a t" style="left:22px;top:157px;font-size:13px;color:#555;-webkit-text-stroke:0.2px #555">Rwanda Vs. Nigeria</div>
<div class="a" style="left:6px;top:179px;width:312px;height:1px;background:#ececec"></div>
<div class="a t" style="left:22px;top:199px;font-size:14px;font-weight:700;color:#000">Rwanda +0.5 (Asian)</div>
<div class="a" style="left:257px;top:196px;width:45px;height:20px;background:#ECEDEF;border-radius:6px"></div>
<div class="a t" style="left:257px;top:199px;width:45px;text-align:center;font-size:14px;color:#000;-webkit-text-stroke:0.3px #000">1.950</div>
<div class="a" style="left:6px;top:236px;width:312px;height:111px;background:#fff;border-radius:6px"></div>
<svg class="a" style="left:23px;top:247px" width="14" height="14" viewBox="0 0 14 14"><path d="M12.2 4.6 A5.8 5.8 0 1 1 9.9 1.9" fill="none" stroke="#E5C33D" stroke-width="1.4"/><polygon points="7,4.7 9.3,6.4 8.4,9.1 5.6,9.1 4.7,6.4" fill="none" stroke="#E5C33D" stroke-width="1.2"/><path d="M7 4.7V1.2M9.3 6.4L12.4 5.3M8.4 9.1L10.4 11.8M5.6 9.1L3.6 11.8M4.7 6.4L1.5 5.3" stroke="#E5C33D" stroke-width="1.2"/></svg>
<div class="a t" style="left:44px;top:248px;font-size:13px;color:#555;-webkit-text-stroke:0.2px #555">Football &bull; Full-Time</div>
<svg class="a" style="left:287px;top:245px" width="14" height="14" viewBox="0 0 14 14"><path d="M0.8 4H13.2M4.6 4V1.6H9.4V4M2.3 5.2V13H11.7V6.2M5.3 6.8V10.4M8.1 6.8V10.4" fill="none" stroke="#7a7a7a" stroke-width="1.3"/></svg>
<div class="a t" style="left:22px;top:272px;font-size:13px;color:#555;-webkit-text-stroke:0.2px #555">Ghana Vs. Chad</div>
<div class="a" style="left:6px;top:294px;width:312px;height:1px;background:#ececec"></div>
<div class="a t" style="left:22px;top:314px;font-size:14px;font-weight:700;color:#000">Ghana -3.25 (Asian)</div>
<div class="a" style="left:257px;top:311px;width:45px;height:20px;background:#ECEDEF;border-radius:6px"></div>
<div class="a t" style="left:257px;top:314px;width:45px;text-align:center;font-size:14px;color:#000;-webkit-text-stroke:0.3px #000">1.886</div>
</div>
<div class="a" style="left:342px;top:133px;width:4px;height:238px;background:#000;border-radius:2px"></div>
<div class="a t" style="left:26px;top:440px;font-size:13px;color:#555;-webkit-text-stroke:0.2px #555">Stake</div>
<div class="a t" style="left:200px;top:440px;font-size:13px;color:#555;-webkit-text-stroke:0.2px #555">Price</div>
<div class="a" style="left:22px;top:457px;width:157px;height:30px;background:#fff;border:1px solid #cdcdcd;border-radius:6px;box-shadow:0 0 0 2px #f1f1f1"></div>
<div class="a t" style="left:31px;top:466px;font-size:13px;color:#777">&euro;</div>
<div class="a t" style="left:43px;top:466px;font-size:13px;color:#000;-webkit-text-stroke:0.35px #000">10</div>
<div class="a" style="left:195px;top:457px;width:147px;height:30px;background:#ECEDEF;border-radius:6px"></div>
<div class="a t" style="left:205px;top:466px;font-size:13px;color:#000;-webkit-text-stroke:0.35px #000">7.138</div>
<div class="a t" style="left:22px;top:500px;font-size:13px;color:#555;-webkit-text-stroke:0.2px #555">Ex. Returns</div>
<div class="a t" style="left:22px;top:515px;font-size:13px;color:#000;-webkit-text-stroke:0.3px #000">&euro;71.38</div>
<div class="a" style="left:162px;top:500px;width:56px;height:28px;background:#6345C2;border-radius:6px"></div>
<div class="a t" style="left:162px;top:508px;width:56px;text-align:center;font-size:13px;color:#fff;-webkit-text-stroke:0.35px #fff">&euro;5</div>
<div class="a" style="left:224px;top:500px;width:55px;height:28px;background:#6345C2;border-radius:6px"></div>
<div class="a t" style="left:224px;top:508px;width:55px;text-align:center;font-size:13px;color:#fff;-webkit-text-stroke:0.35px #fff">&euro;10</div>
<div class="a" style="left:285px;top:500px;width:56px;height:28px;background:#6345C2;border-radius:6px"></div>
<div class="a t" style="left:285px;top:508px;width:56px;text-align:center;font-size:13px;color:#fff;-webkit-text-stroke:0.35px #fff">&euro;15</div>
<div class="a" style="left:22px;top:537px;width:320px;height:32px;background:#ECEDEF;border-radius:6px"></div>
<div class="a t" style="left:32px;top:546px;font-size:13px;color:#555;-webkit-text-stroke:0.2px #555">Max Accumulator Stake Is</div>
<div class="a t" style="left:232px;top:546px;width:101px;text-align:right;font-size:13px;color:#000;-webkit-text-stroke:0.3px #000">&euro;130.03</div>
<div class="a" style="left:22px;top:577px;width:320px;height:32px;background:#00874F;border-radius:6px"></div>
<div class="a t" style="left:22px;top:586px;width:320px;text-align:center;font-size:14px;font-weight:700;color:#fff">Place Accumulator</div>
<div class="a" style="left:1px;top:82px;width:358px;height:542px;border:7px solid #F9471B;border-radius:30px"></div>
<svg class="a" style="left:0;top:0" width="1916" height="643"><polygon points="371,367 438,333 438,360 538,360 538,374 438,374 438,400" fill="#F9471B"/></svg>
</div></body></html>
